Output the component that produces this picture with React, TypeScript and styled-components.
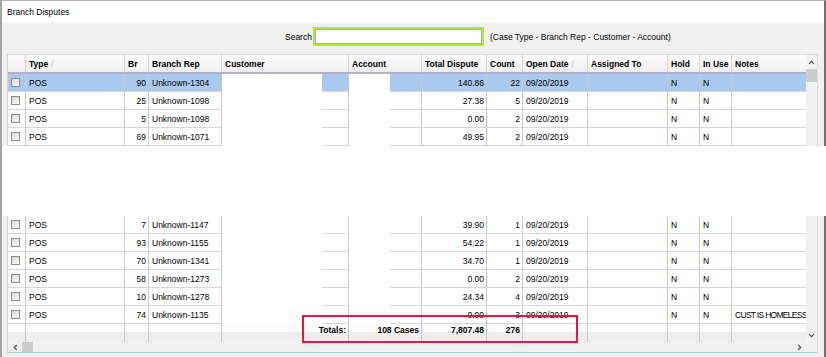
import * as React from "react";
import styled, { createGlobalStyle } from "styled-components";

interface Dispute {
  br: number;
  rep: string;
  total: string;
  count: number;
  notes?: string;
  selected?: boolean;
}

const topRows: Dispute[] = [
  { br: 90, rep: "Unknown-1304", total: "140.86", count: 22, selected: true },
  { br: 25, rep: "Unknown-1098", total: "27.38", count: 5 },
  { br: 5, rep: "Unknown-1098", total: "0.00", count: 2 },
  { br: 69, rep: "Unknown-1071", total: "49.95", count: 2 },
];

const bottomRows: Dispute[] = [
  { br: 7, rep: "Unknown-1147", total: "39.90", count: 1 },
  { br: 93, rep: "Unknown-1155", total: "54.22", count: 1 },
  { br: 70, rep: "Unknown-1341", total: "34.70", count: 1 },
  { br: 58, rep: "Unknown-1273", total: "0.00", count: 2 },
  { br: 10, rep: "Unknown-1278", total: "24.34", count: 4 },
  { br: 74, rep: "Unknown-1135", total: "0.00", count: 3, notes: "CUST IS HOMELESS" },
];

const GlobalStyle = createGlobalStyle`
  html, body { margin: 0; padding: 0; background: #ffffff; }
  body {
    font-family: "Liberation Sans", Arial, sans-serif;
    font-size: 8.5px;
    color: #000;
  }
  * { box-sizing: border-box; }
`;

const Window = styled.div`
  position: relative;
  width: 826px;
  height: 357px;
  display: flex;
  flex-direction: column;
  border-left: 2px solid #a3a3a3;
  overflow: hidden;
`;

const TitleBar = styled.div`
  height: 23px;
  flex: none;
  border-top: 1px solid #b4b4b4;
  border-right: 2px solid #6f6f6f;
  background: #ffffff;
  display: flex;
  align-items: center;
  padding-left: 5px;
`;

const Panel = styled.div<{ $grow?: boolean }>`
  background: #f0f0f0;
  border-right: 2px solid #6f6f6f;
  padding-left: 5px;
  flex: ${p => (p.$grow ? 1 : "none")};
`;

const SearchRow = styled.div`
  display: flex;
  align-items: center;
  height: 19px;
  margin: 4px 0 8px 278px;
`;

const SearchLabel = styled.span`
  margin-right: 1px;
`;

const SearchInput = styled.div`
  width: 171px;
  height: 19px;
  background: #ffffff;
  border: 2px solid #bce42c;
  box-shadow: inset 0 0 0 1px #86b3e3;
  margin-right: 6px;
`;

const Grid = styled.div<{ $part: "top" | "bottom" }>`
  width: 811px;
  display: flex;
  flex-direction: column;
  border-left: 1px solid #d2d2d2;
  border-right: 1px solid #e0dfc9;
  border-top: ${p => (p.$part === "top" ? "1px solid #d8d8d8" : "none")};
  border-bottom: ${p => (p.$part === "bottom" ? "1px solid #9dd6d1" : "none")};
`;

const GridBody = styled.div`
  display: flex;
`;

const Table = styled.div`
  width: 798px;
  display: flex;
  flex-direction: column;
`;

const HeaderRow = styled.div`
  display: flex;
  height: 19px;
  background: linear-gradient(#fdfdfd, #eeeeee);
  border-bottom: 2px solid #b3b0cf;
`;

const HeaderCell = styled.div<{ $w: number; $last?: boolean }>`
  width: ${p => p.$w}px;
  flex: none;
  display: flex;
  align-items: center;
  padding-left: 3px;
  font-weight: bold;
  white-space: nowrap;
  border-right: ${p => (p.$last ? "none" : "1px solid #d3d3d3")};
`;

const SortMark = styled.span`
  color: #bcbcbc;
  font-weight: normal;
  margin-left: 3px;
`;

const Row = styled.div<{ $selected?: boolean }>`
  display: flex;
  height: 18px;
  background: ${p => (p.$selected ? "#aac9ef" : "#ffffff")};
`;

const Cell = styled.div<{ $w: number; $right?: boolean; $last?: boolean; $tight?: boolean }>`
  position: relative;
  width: ${p => p.$w}px;
  flex: none;
  display: flex;
  align-items: center;
  justify-content: ${p => (p.$right ? "flex-end" : "flex-start")};
  padding: 0 2px 0 3px;
  white-space: nowrap;
  overflow: ${p => (p.$tight ? "hidden" : "visible")};
  letter-spacing: ${p => (p.$tight ? "-0.7px" : "normal")};
  border-right: ${p => (p.$last ? "none" : "1px solid #c9c9c9")};
  border-bottom: 1px solid #d7d7d7;
`;

const Redact = styled.div<{ $w: number }>`
  position: absolute;
  left: 0;
  top: 0;
  bottom: -1px;
  width: ${p => p.$w}px;
  background: #ffffff;
`;

const CheckBox = styled.span`
  width: 9px;
  height: 9px;
  border: 1px solid #8c8c8c;
  background: linear-gradient(135deg, #dadada, #f9f9f9);
`;

const TotalsRow = styled.div`
  display: flex;
  height: 18px;
  background: linear-gradient(#fafafa 0, #fafafa 45%, #ededed 45%, #ededed 100%);
`;

const TotalCell = styled.div<{ $w: number; $last?: boolean }>`
  width: ${p => p.$w}px;
  flex: none;
  line-height: 12px;
  padding-right: 2px;
  text-align: right;
  font-weight: bold;
  white-space: nowrap;
  border-right: ${p => (p.$last ? "none" : "1px solid #c9c9c9")};
`;

const VScroll = styled.div<{ $end?: boolean }>`
  width: 11px;
  flex: none;
  background: #f0f0f0;
  display: flex;
  flex-direction: column;
  justify-content: ${p => (p.$end ? "flex-end" : "flex-start")};
`;

const ArrowBox = styled.div<{ $h: number; $w?: number }>`
  height: ${p => p.$h}px;
  width: ${p => (p.$w ? `${p.$w}px` : "auto")};
  flex: none;
  display: flex;
  align-items: center;
  justify-content: center;
`;

const Thumb = styled.div<{ $w: number; $h: number }>`
  width: ${p => p.$w}px;
  height: ${p => p.$h}px;
  flex: none;
  background: #cdcdcd;
`;

const HScrollRow = styled.div`
  display: flex;
  height: 10px;
  background: #f0f0f0;
`;

const HTrack = styled.div`
  width: 798px;
  display: flex;
  align-items: center;
`;

const Spacer = styled.div`
  flex: 1;
`;

const Snip = styled.div`
  height: 70px;
  flex: none;
  background: #ffffff;
`;

const Callout = styled.div`
  position: absolute;
  left: 300px;
  top: 315px;
  width: 276px;
  height: 28px;
  border: 2px solid #e8163d;
`;

const Chevron = ({ dir }: { dir: "up" | "down" | "left" | "right" }) => {
  const rot = { up: 0, right: 90, down: 180, left: 270 }[dir];
  return (
    <svg width="7" height="7" viewBox="0 0 7 7">
      <polyline
        points="1,4.8 3.5,2.3 6,4.8"
        fill="none"
        stroke="#555"
        strokeWidth="1.2"
        transform={`rotate(${rot} 3.5 3.5)`}
      />
    </svg>
  );
};

const widths = [18, 99, 24, 73, 127, 73, 65, 36, 65, 80, 32, 32, 74];

const DisputeRow = ({ d }: { d: Dispute }) => (
  <Row $selected={d.selected}>
    <Cell $w={widths[0]}><CheckBox /></Cell>
    <Cell $w={widths[1]}>POS</Cell>
    <Cell $w={widths[2]} $right>{d.br}</Cell>
    <Cell $w={widths[3]}>{d.rep}</Cell>
    <Cell $w={widths[4]}><Redact $w={100} /></Cell>
    <Cell $w={widths[5]}><Redact $w={41} /></Cell>
    <Cell $w={widths[6]} $right>{d.total}</Cell>
    <Cell $w={widths[7]} $right>{d.count}</Cell>
    <Cell $w={widths[8]}>09/20/2019</Cell>
    <Cell $w={widths[9]} />
    <Cell $w={widths[10]}>N</Cell>
    <Cell $w={widths[11]}>N</Cell>
    <Cell $w={widths[12]} $last $tight>{d.notes}</Cell>
  </Row>
);

const totals = ["", "", "", "", "Totals:", "108 Cases", "7,807.48", "276", "", "", "", "", ""];

const App = () => (
  <>
    <GlobalStyle />
    <Window>
      <TitleBar>Branch Disputes</TitleBar>
      <Panel>
        <SearchRow>
          <SearchLabel>Search</SearchLabel>
          <SearchInput />
          <span>(Case Type - Branch Rep - Customer - Account)</span>
        </SearchRow>
        <Grid $part="top">
          <GridBody>
            <Table>
              <HeaderRow>
                <HeaderCell $w={widths[0]} />
                <HeaderCell $w={widths[1]}>Type<SortMark>/</SortMark></HeaderCell>
                <HeaderCell $w={widths[2]}>Br</HeaderCell>
                <HeaderCell $w={widths[3]}>Branch Rep</HeaderCell>
                <HeaderCell $w={widths[4]}>Customer</HeaderCell>
                <HeaderCell $w={widths[5]}>Account</HeaderCell>
                <HeaderCell $w={widths[6]}>Total Dispute</HeaderCell>
                <HeaderCell $w={widths[7]}>Count</HeaderCell>
                <HeaderCell $w={widths[8]}>Open Date<SortMark>/</SortMark></HeaderCell>
                <HeaderCell $w={widths[9]}>Assigned To</HeaderCell>
                <HeaderCell $w={widths[10]}>Hold</HeaderCell>
                <HeaderCell $w={widths[11]}>In Use</HeaderCell>
                <HeaderCell $w={widths[12]} $last>Notes</HeaderCell>
              </HeaderRow>
              {topRows.map((d, i) => <DisputeRow key={i} d={d} />)}
            </Table>
            <VScroll>
              <ArrowBox $h={14}><Chevron dir="up" /></ArrowBox>
              <Thumb $w={11} $h={13} />
            </VScroll>
          </GridBody>
        </Grid>
      </Panel>
      <Snip />
      <Panel $grow>
        <Grid $part="bottom">
          <GridBody>
            <Table>
              {bottomRows.map((d, i) => <DisputeRow key={i} d={d} />)}
              <TotalsRow>
                {totals.map((t, i) => (
                  <TotalCell key={i} $w={widths[i]} $last={i === widths.length - 1}>{t}</TotalCell>
                ))}
              </TotalsRow>
            </Table>
            <VScroll $end>
              <ArrowBox $h={13}><Chevron dir="down" /></ArrowBox>
            </VScroll>
          </GridBody>
          <HScrollRow>
            <HTrack>
              <ArrowBox $h={10} $w={14}><Chevron dir="left" /></ArrowBox>
              <Thumb $w={11} $h={10} />
              <Spacer />
              <ArrowBox $h={10} $w={14}><Chevron dir="right" /></ArrowBox>
            </HTrack>
          </HScrollRow>
        </Grid>
      </Panel>
      <Callout />
    </Window>
  </>
);

export default App;
